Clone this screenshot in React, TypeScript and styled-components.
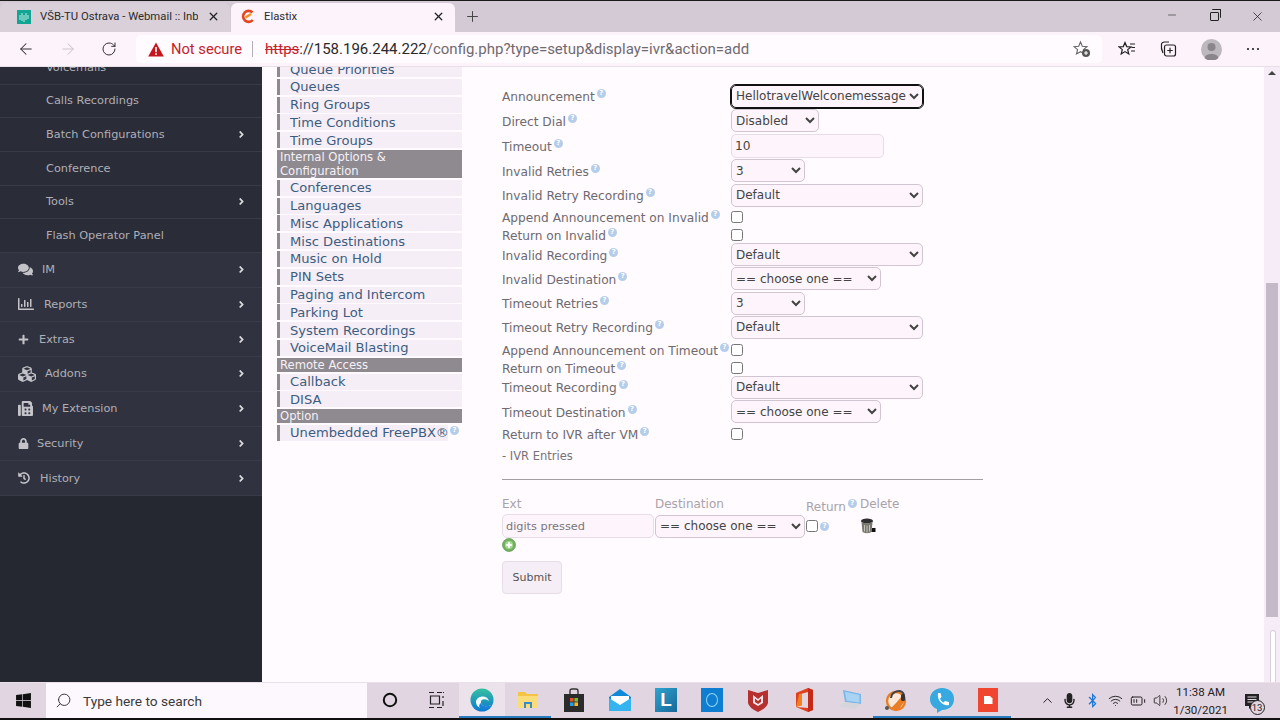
import React from 'react'
import styled, { createGlobalStyle } from 'styled-components'
import {
  FaComments,
  FaPlus,
  FaCubes,
  FaFax,
  FaLock,
  FaHistory,
  FaAngleRight,
  FaRegChartBar,
  FaWindows,
  FaBluetoothB,
  FaMicrophone,
} from 'react-icons/fa'
import {
  ArrowLeft,
  ArrowRight,
  RotateCw,
  X,
  Plus,
  Minus,
  Search,
  ChevronUp,
  Wifi,
  Volume2,
  BatteryMedium,
} from 'lucide-react'

const GlobalStyle = createGlobalStyle`
  html, body { margin: 0; padding: 0; overflow: hidden; background: #fffbff; }
  * { box-sizing: border-box; }
`

const Screen = styled.div`
  width: 1280px;
  height: 720px;
  display: flex;
  flex-direction: column;
  overflow: hidden;
  position: relative;
  font-family: 'DejaVu Sans', sans-serif;
`

/* browser chrome */
const TabStrip = styled.div`
  height: 32px;
  flex: none;
  display: flex;
  align-items: flex-end;
  background: #d3cad5;
  border-top: 1px solid #1a1a1a;
  font-family: Roboto, sans-serif;
  font-size: 11.3px;
  color: #2b2b2b;
`
const Tab = styled.div<{ $active?: boolean }>`
  width: ${p => (p.$active ? '224px' : '230px')};
  height: 29px;
  display: flex;
  align-items: center;
  gap: 9px;
  padding: 0 10px 2px ${p => (p.$active ? '10px' : '17px')};
  border-radius: 6px 6px 0 0;
  background: ${p => (p.$active ? '#fdf3fb' : '#d9d0da')};
  margin-left: ${p => (p.$active ? '1px' : '0')};
`
const TabTitle = styled.span`
  flex: 1;
  white-space: nowrap;
  overflow: hidden;
`
const NewTab = styled.div`
  width: 34px;
  display: flex;
  justify-content: center;
  align-self: center;
  color: #444;
`
const WindowButtons = styled.div`
  margin-left: auto;
  padding-right: 1px;
  display: flex;
  align-self: center;
  color: #222;
`
const WindowButton = styled.div`
  width: 43px;
  display: flex;
  justify-content: center;
`
const RestoreIcon = styled.div`
  width: 9px;
  height: 9px;
  margin: 3px 0 0;
  border: 1px solid #222;
  position: relative;
  border-radius: 1px;
  &::after {
    content: '';
    position: absolute;
    left: 1px;
    top: -4px;
    width: 8px;
    height: 8px;
    border: 1px solid #222;
    border-left: 0;
    border-bottom: 0;
    border-radius: 1px;
  }
`
const Toolbar = styled.div`
  height: 35px;
  flex: none;
  display: flex;
  align-items: center;
  background: #fdf3fb;
  border-bottom: 1px solid #e8dfe9;
  padding-left: 5px;
`
const ToolButton = styled.div<{ $w: number; $dim?: boolean }>`
  width: ${p => p.$w}px;
  display: flex;
  justify-content: center;
  color: ${p => (p.$dim ? '#cfc6cf' : '#333')};
`
const AddressBar = styled.div`
  width: 966px;
  height: 28px;
  margin-left: 6px;
  padding: 0 11px 0 12px;
  display: flex;
  align-items: center;
  border-radius: 5px;
  background: #fffbff;
  font-family: Roboto, sans-serif;
  font-size: 15px;
  white-space: nowrap;
`
const NotSecure = styled.span`
  color: #c4232b;
  margin-left: 7px;
  font-size: 14.7px;
`
const Divider = styled.span`
  width: 1px;
  height: 16px;
  margin: 0 12px 0 10px;
  background: #b5adb6;
`
const UrlScheme = styled.span`
  color: #c4232b;
  text-decoration: line-through;
`
const UrlHost = styled.span`
  color: #2a2a2a;
`
const UrlPath = styled.span`
  color: #6f6a70;
`
const AddFavourite = styled.div`
  margin-left: auto;
  display: flex;
  color: #555;
`
const Avatar = styled.div`
  width: 21px;
  height: 21px;
  border-radius: 50%;
  background: #bdb7be;
  display: flex;
  align-items: center;
  justify-content: center;
`

/* page */
const Page = styled.div`
  flex: 1;
  min-height: 0;
  display: flex;
  overflow: hidden;
  background: #fffbff;
`
const Sidebar = styled.nav`
  width: 262px;
  flex: none;
  background: #252831;
  overflow: hidden;
`
const SideList = styled.div`
  margin-top: -16px;
`
const SideRow = styled.div<{ $main?: boolean }>`
  height: ${p => (p.$main ? '34.75px' : '33.65px')};
  display: flex;
  align-items: center;
  padding: ${p => (p.$main ? '0 16px 0 18px' : '0 16px 0 46px')};
  background: ${p => (p.$main ? '#30333f' : '#2a2c38')};
  border-bottom: 1px solid #383b47;
  color: #afafb6;
  font-size: 11.3px;
`
const SideIcon = styled.span<{ $w: number }>`
  width: ${p => p.$w}px;
  flex: none;
  display: flex;
  align-items: center;
  color: #c3c3c9;
`
const SideArrow = styled.span`
  margin-left: auto;
  display: flex;
  color: #dcdce0;
  margin-right: -1px;
`
const ModuleNav = styled.div`
  width: 185px;
  flex: none;
  margin: -6px 0 0 15px;
`
const NavItem = styled.div<{ $short?: boolean }>`
  width: ${p => (p.$short ? '171px' : '185px')};
  height: 16px;
  margin-bottom: 1.8px;
  padding-left: 10px;
  display: flex;
  align-items: center;
  white-space: nowrap;
  position: relative;
  border-left: 3px solid #8f8a90;
  background: #f6eef6;
  color: #3c5d80;
  font-size: 13.1px;
`
const NavHeader = styled.div`
  margin: 0 0 1.8px;
  padding: 0 3px;
  background: #8f8a90;
  color: #f6f1f6;
  font-size: 11.6px;
  line-height: 14px;
`
const NavHelp = styled.span`
  position: absolute;
  left: 168px;
  top: 1px;
`
const Content = styled.main`
  flex: 1;
  padding: 17px 0 0 40px;
  min-width: 0;
`
const Row = styled.div<{ $h: number }>`
  height: ${p => p.$h}px;
  display: flex;
  align-items: center;
`
const Label = styled.span`
  width: 229px;
  flex: none;
  white-space: nowrap;
  color: #6e6a70;
  font-size: 12.2px;
  padding-top: 1px;
`
const Help = styled.sup`
  display: inline-flex;
  width: 9px;
  height: 9px;
  margin-left: 2px;
  border-radius: 50%;
  align-items: center;
  justify-content: center;
  background: #b4cdea;
  color: #fff;
  font-size: 7px;
  font-weight: bold;
  line-height: 1;
  vertical-align: 6px;
`
const Select = styled.select<{ $w: number; $focus?: boolean }>`
  width: ${p => p.$w}px;
  height: 23px;
  padding: 0;
  border: 1px solid #d0c5d1;
  border-radius: 5px;
  background-color: #fdf5fb;
  color: #444;
  font-family: 'DejaVu Sans', sans-serif;
  font-size: 12px;
  ${p => p.$focus && 'border: 1px solid #111; outline: 1px solid #111;'}
`
const TextInput = styled.input<{ $w: number; $muted?: boolean }>`
  width: ${p => p.$w}px;
  height: 24px;
  padding: 0 3px;
  border: 1px solid #e6dde7;
  border-radius: 5px;
  background: #fdf5fb;
  color: ${p => (p.$muted ? '#7a757b' : '#444')};
  font-family: 'DejaVu Sans', sans-serif;
  font-size: ${p => (p.$muted ? '11.3px' : '12.2px')};
`
const Check = styled.input`
  width: 12px;
  height: 12px;
  margin: 0;
`
const Section = styled.div`
  height: 24px;
  display: flex;
  align-items: center;
  color: #777278;
  font-size: 11.5px;
`
const Rule = styled.hr`
  width: 481px;
  height: 1px;
  margin: 11px 0 0;
  border: 0;
  background: #a39ea4;
`
const EntryGrid = styled.div`
  margin-top: 17px;
  display: grid;
  grid-template-columns: 153px 151px 54px auto;
  width: 481px;
`
const EntryHead = styled.div<{ $low?: boolean }>`
  height: 17px;
  color: #a8a3a9;
  font-size: 12px;
  white-space: nowrap;
  padding-top: ${p => (p.$low ? '2px' : '0')};
`
const EntryCell = styled.div`
  display: flex;
  align-items: center;
  height: 24px;
`
const AddEntry = styled.div`
  display: flex;
`
const Submit = styled.button`
  display: block;
  margin-top: 9px;
  width: 60px;
  height: 33px;
  padding: 0;
  border: 1px solid #e6dde7;
  border-radius: 4px;
  background: #f6eef6;
  color: #555;
  font-family: 'DejaVu Sans', sans-serif;
  font-size: 11px;
`
const Scrollbar = styled.div`
  width: 16px;
  flex: none;
  padding: 0 2px;
  background: #f5ecf7;
  position: relative;
`
const ScrollUp = styled.div`
  width: 0;
  margin: 4px auto 0;
  border: 4px solid transparent;
  border-top: 0;
  border-bottom: 4px solid #444;
`
const ScrollThumb = styled.div`
  height: 334px;
  margin-top: 208px;
  background: #c4b9c6;
`
const EdgePill = styled.div`
  position: absolute;
  left: 6px;
  bottom: 0;
  width: 6px;
  height: 52px;
  border: 1px solid #d8ced9;
  border-bottom: 0;
  border-radius: 3px 3px 0 0;
  background: #fff;
`

/* windows taskbar */
const Taskbar = styled.div`
  height: 38px;
  flex: none;
  display: flex;
  align-items: stretch;
  background: #e1d5e1;
  border-bottom: 2px solid #111;
  border-top: 1px solid #e9e0e9;
  font-family: Roboto, sans-serif;
`
const StartButton = styled.div`
  width: 46px;
  display: flex;
  align-items: center;
  justify-content: center;
  color: #111;
`
const SearchBox = styled.div`
  width: 321px;
  display: flex;
  align-items: center;
  gap: 11px;
  padding-left: 9px;
  background: #fdf8fd;
  color: #3a3a3a;
  font-size: 13.7px;
`
const TaskIcon = styled.div<{ $open?: boolean; $active?: boolean }>`
  width: 46px;
  display: flex;
  align-items: center;
  justify-content: center;
  background: ${p => (p.$active ? '#ebe2ec' : 'transparent')};
  border-bottom: 2px solid ${p => (p.$open ? '#2a7bc0' : 'transparent')};
`
const Tray = styled.div`
  margin-left: 25px;
  display: flex;
  align-items: center;
  color: #222;
`
const TrayIcon = styled.div`
  width: 22.6px;
  display: flex;
  justify-content: center;
`
const Clock = styled.div`
  width: 58px;
  text-align: center;
  color: #222;
  font-size: 11.5px;
  line-height: 18px;
`
const Notifications = styled.div`
  width: 44px;
  display: flex;
  justify-content: center;
  position: relative;
`
const NotifyBadge = styled.span`
  position: absolute;
  left: 20px;
  top: 7px;
  width: 15px;
  height: 15px;
  border: 1px solid #222;
  border-radius: 50%;
  background: #e1d5e1;
  font-size: 9.5px;
  line-height: 13px;
  text-align: center;
  color: #222;
`
const LetterTile = styled.div`
  width: 22px;
  height: 24px;
  display: flex;
  align-items: center;
  justify-content: center;
  background: linear-gradient(135deg, #2fa3cf, #17689a);
  color: #fff;
  font-family: 'Liberation Sans', sans-serif;
  font-size: 19px;
  font-weight: bold;
`
const CircleTile = styled.div`
  width: 22px;
  height: 24px;
  display: flex;
  align-items: center;
  justify-content: center;
  background: #0f7ed0;
  &::after {
    content: '';
    width: 10px;
    height: 12px;
    border: 1.5px solid #8fd6f5;
    border-radius: 50%;
  }
`

const subItems = [
  { label: 'Voicemails' },
  { label: 'Calls Recordings' },
  { label: 'Batch Configurations', arrow: true },
  { label: 'Conference' },
  { label: 'Tools', arrow: true },
  { label: 'Flash Operator Panel' },
]

const mainItems = [
  { label: 'IM', w: 24, icon: <FaComments size={15} /> },
  { label: 'Reports', w: 26, icon: <FaRegChartBar size={16} /> },
  { label: 'Extras', w: 21, icon: <FaPlus size={11} /> },
  { label: 'Addons', w: 27, icon: <FaCubes size={18} /> },
  { label: 'My Extension', w: 24, icon: <FaFax size={15} /> },
  { label: 'Security', w: 19, icon: <FaLock size={11} /> },
  { label: 'History', w: 22, icon: <FaHistory size={12} /> },
]

type NavEntry = { head?: string; label?: string }

const navEntries: NavEntry[] = [
  { label: 'Queue Priorities' },
  { label: 'Queues' },
  { label: 'Ring Groups' },
  { label: 'Time Conditions' },
  { label: 'Time Groups' },
  { head: 'Internal Options & Configuration' },
  { label: 'Conferences' },
  { label: 'Languages' },
  { label: 'Misc Applications' },
  { label: 'Misc Destinations' },
  { label: 'Music on Hold' },
  { label: 'PIN Sets' },
  { label: 'Paging and Intercom' },
  { label: 'Parking Lot' },
  { label: 'System Recordings' },
  { label: 'VoiceMail Blasting' },
  { head: 'Remote Access' },
  { label: 'Callback' },
  { label: 'DISA' },
  { head: 'Option' },
]

type Field =
  | { kind: 'select'; label: string; h: number; value: string; w: number; focus?: boolean }
  | { kind: 'input'; label: string; h: number; value: string }
  | { kind: 'check'; label: string; h: number }

const CHOOSE = '== choose one =='

const fields: Field[] = [
  { kind: 'select', label: 'Announcement', h: 24, value: 'HellotravelWelconemessage', w: 192, focus: true },
  { kind: 'select', label: 'Direct Dial', h: 25, value: 'Disabled', w: 88 },
  { kind: 'input', label: 'Timeout', h: 25, value: '10' },
  { kind: 'select', label: 'Invalid Retries', h: 25, value: '3', w: 74 },
  { kind: 'select', label: 'Invalid Retry Recording', h: 24, value: 'Default', w: 192 },
  { kind: 'check', label: 'Append Announcement on Invalid', h: 19 },
  { kind: 'check', label: 'Return on Invalid', h: 17 },
  { kind: 'select', label: 'Invalid Recording', h: 23, value: 'Default', w: 192 },
  { kind: 'select', label: 'Invalid Destination', h: 25, value: CHOOSE, w: 150 },
  { kind: 'select', label: 'Timeout Retries', h: 24, value: '3', w: 74 },
  { kind: 'select', label: 'Timeout Retry Recording', h: 24, value: 'Default', w: 192 },
  { kind: 'check', label: 'Append Announcement on Timeout', h: 22 },
  { kind: 'check', label: 'Return on Timeout', h: 14 },
  { kind: 'select', label: 'Timeout Recording', h: 24, value: 'Default', w: 192 },
  { kind: 'select', label: 'Timeout Destination', h: 25, value: CHOOSE, w: 150 },
  { kind: 'check', label: 'Return to IVR after VM', h: 20 },
]

const ValueSelect = ({ value, w, focus }: { value: string; w: number; focus?: boolean }) => (
  <Select $w={w} $focus={focus} defaultValue={value}>
    <option>{value}</option>
  </Select>
)

const WebmailFavicon = () => (
  <svg width="14" height="14" viewBox="0 0 14 14">
    <rect width="14" height="14" fill="#12a594" />
    <path d="M3 5v5M5 3v8M7 5v7M9 3v7M11 5v4" stroke="#bfeee6" strokeWidth="1" />
  </svg>
)

const ElastixFavicon = () => (
  <svg width="14" height="15" viewBox="0 0 14 15">
    <path d="M11.5 3.5A5.5 5.5 0 1 0 11.8 11" fill="none" stroke="#e2451f" strokeWidth="2.6" />
    <path d="M4.5 8.5 L10 5" stroke="#f09020" strokeWidth="2.4" />
  </svg>
)

const WarningIcon = () => (
  <svg width="16" height="15" viewBox="0 0 16 15">
    <path d="M8 0.5 L15.8 14.5 H0.2 Z" fill="#c4161c" />
    <rect x="7.2" y="5" width="1.6" height="5.2" fill="#fff" />
    <rect x="7.2" y="11.2" width="1.6" height="1.7" fill="#fff" />
  </svg>
)

const FavouritesIcon = () => (
  <svg width="18" height="18" viewBox="0 0 18 18" fill="none" stroke="#222" strokeWidth="1.2">
    <path d="M7 2.5 L8.7 6.6 L13 6.9 L9.7 9.6 L10.8 14 L7 11.6 L3.2 14 L4.3 9.6 L1 6.9 L5.3 6.6 Z" />
    <path d="M12 4h5M13.5 7.5H17M13 11h4" />
  </svg>
)

const CollectionsIcon = () => (
  <svg width="18" height="18" viewBox="0 0 18 18" fill="none" stroke="#222" strokeWidth="1.2">
    <path d="M4 13 C2.5 10 2 7 2.5 4 C2.8 2.4 4 2 5.5 2 H10" />
    <rect x="5.5" y="5" width="11" height="11" rx="2" />
    <path d="M11 7.8v5.4M8.3 10.5h5.4" />
  </svg>
)

const StarAddIcon = () => (
  <svg width="18" height="18" viewBox="0 0 18 18">
    <path
      d="M7.5 2 L9.3 6.2 L14 6.6 L10.4 9.6 L11.5 14 L7.5 11.7 L3.5 14 L4.6 9.6 L1 6.6 L5.7 6.2 Z"
      fill="none"
      stroke="#666"
      strokeWidth="1.1"
    />
    <circle cx="13" cy="13" r="4" fill="#555" />
    <path d="M13 11v4M11 13h4" stroke="#fff" strokeWidth="1.1" />
  </svg>
)

const AvatarIcon = () => (
  <svg width="21" height="21" viewBox="0 0 21 21">
    <circle cx="10.5" cy="8" r="4" fill="#8a858b" />
    <path d="M3.5 19 C4.5 13.5 16.5 13.5 17.5 19 A10.5 10.5 0 0 1 3.5 19 Z" fill="#8a858b" />
  </svg>
)

const DotsIcon = () => (
  <svg width="14" height="4" viewBox="0 0 14 4" fill="#222">
    <circle cx="2" cy="2" r="1.1" />
    <circle cx="7" cy="2" r="1.1" />
    <circle cx="12" cy="2" r="1.1" />
  </svg>
)

const TrashIcon = () => (
  <svg width="16" height="16" viewBox="0 0 16 16">
    <ellipse cx="7" cy="3" rx="6" ry="2.4" fill="#2e2e2e" />
    <path d="M1.5 4 L2.5 14 Q7 16.5 11.5 14 L12.5 4 Q7 6.5 1.5 4 Z" fill="#77776f" />
    <path d="M4.5 7v6.5M7 7.5v7M9.5 7v6.5" stroke="#c2c2ba" strokeWidth="1" />
    <path d="M12 10h3.5v4H11.5z" fill="#111" />
  </svg>
)

const AddIcon = () => (
  <svg width="14" height="14" viewBox="0 0 14 14">
    <circle cx="7" cy="7" r="6.5" fill="#6fb35c" stroke="#4d8a40" strokeWidth="0.6" />
    <circle cx="7" cy="7" r="4" fill="#a8d898" />
    <path d="M7 4.2v5.6M4.2 7h5.6" stroke="#fff" strokeWidth="1.8" />
  </svg>
)

const EdgeIcon = () => (
  <svg width="24" height="24" viewBox="0 0 24 24">
    <defs>
      <linearGradient id="edgeA" x1="0" y1="0" x2="0" y2="1">
        <stop offset="0" stopColor="#35c1a0" />
        <stop offset="1" stopColor="#0c78d0" />
      </linearGradient>
    </defs>
    <circle cx="12" cy="12" r="11.5" fill="url(#edgeA)" />
    <path d="M6 14 C6 8 17 6 19 13 C15 10 10 11 11 15 C12 19 17 19 21 17 C17 23 6 21 6 14 Z" fill="#fff" opacity="0.95" />
    <path d="M11 15 C12 19 17 19 21 17 C19 21 15 22 12 21 C9 20 8 17 11 15 Z" fill="#1780d8" />
  </svg>
)

const FolderIcon = () => (
  <svg width="22" height="20" viewBox="0 0 22 20">
    <path d="M1 2 H8 L10 4 H21 V18 H1 Z" fill="#f6c445" />
    <rect x="1" y="6" width="20" height="12" fill="#fbdc7a" />
    <path d="M7 18 V12 H15 V18 H13 V14 H9 V18 Z" fill="#3a8cc8" />
  </svg>
)

const StoreIcon = () => (
  <svg width="20" height="24" viewBox="0 0 20 24">
    <path d="M6 6 V3 Q6 1 8 1 H12 Q14 1 14 3 V6" fill="none" stroke="#333" strokeWidth="1.4" />
    <rect x="0" y="6" width="20" height="18" fill="#2b2b2b" />
    <rect x="6" y="10" width="3.6" height="3.6" fill="#e8502a" />
    <rect x="10.4" y="10" width="3.6" height="3.6" fill="#7cb92e" />
    <rect x="6" y="14.4" width="3.6" height="3.6" fill="#23a0e8" />
    <rect x="10.4" y="14.4" width="3.6" height="3.6" fill="#f6b81e" />
  </svg>
)

const MailIcon = () => (
  <svg width="24" height="24" viewBox="0 0 24 24">
    <path d="M1 9 L12 1 L23 9 V23 H1 Z" fill="#0f8ad8" />
    <path d="M3 8 H21 V13 L12 18 L3 13 Z" fill="#fff" />
    <path d="M1 10 L12 17 L23 10 V23 H1 Z" fill="#35b4ef" />
  </svg>
)

const ShieldIcon = () => (
  <svg width="20" height="24" viewBox="0 0 20 24">
    <path d="M0 2 L10 5 L20 2 V15 Q19 20 10 24 Q1 20 0 15 Z" fill="#b5302f" />
    <path d="M5 7 L10 11 L15 7 V15 L10 18 L5 15 Z" fill="#f0e4e8" />
    <path d="M7 10.5 L10 13 L13 10.5 V14 L10 16 L7 14 Z" fill="#b5302f" />
  </svg>
)

const OfficeIcon = () => (
  <svg width="17" height="24" viewBox="0 0 17 24">
    <path d="M0 5 L12 0 L17 2 V22 L12 24 L0 19 L12 20 V4 L3 6.5 V17 L0 19 Z" fill="#e0401e" />
    <path d="M12 0 L17 2 V22 L12 24 Z" fill="#c32a18" />
    <path d="M3 6.5 L6 5.7 V17.5 L0 19 Z" fill="#f08020" />
  </svg>
)

const LaptopIcon = () => (
  <svg width="26" height="24" viewBox="0 0 26 24">
    <path d="M6 2 L24 6 V16 L8 14 Z" fill="#7ab6e6" />
    <path d="M8 3.8 L22.5 7 V14.5 L9.5 12.8 Z" fill="#a9d3f2" />
    <path d="M2 18 L8 14 L24 16 L18 21 Z" fill="#d5d5db" />
  </svg>
)

const HeadsetIcon = () => (
  <svg width="26" height="26" viewBox="0 0 26 26">
    <circle cx="13" cy="14" r="9" fill="#fbe8d8" stroke="#e97e28" strokeWidth="2.4" />
    <path d="M7 22 L13 16 L19 9 L22 14 L16 22 Z" fill="#e97e28" />
    <path d="M8 11 C9 3 19 2 21 8" fill="none" stroke="#444" strokeWidth="2" />
    <rect x="18" y="7" width="4" height="7" rx="1.6" fill="#333" />
    <circle cx="4" cy="21" r="2" fill="#555" />
  </svg>
)

const PhoneBubbleIcon = () => (
  <svg width="24" height="26" viewBox="0 0 24 26">
    <path d="M12 1 C20 1 24 6 24 12 C24 19 19 23 12 23 L7 26 V22 C2 20 0 16 0 12 C0 6 5 1 12 1 Z" fill="#38a8e0" />
    <path d="M8 6 L10.5 6 L11.5 10 L10 11.5 C10.5 13.5 12 15 13.5 15.5 L15 14 L19 15 V18 C13 19.5 6.5 13 8 6 Z" fill="#fff" />
  </svg>
)

const RedTileIcon = () => (
  <svg width="20" height="24" viewBox="0 0 20 24">
    <rect width="20" height="24" fill="#f0452f" />
    <path d="M6 8 H12 L14.5 10.5 V16 H6 Z" fill="#fff" />
  </svg>
)

const NotifyIcon = () => (
  <svg width="16" height="16" viewBox="0 0 16 16">
    <path d="M1 1h14v12H8l-3 3v-3H1z" fill="#222" />
    <path d="M3.5 4h9M3.5 6.5h9M3.5 9h6" stroke="#e1d5e1" strokeWidth="1" />
  </svg>
)

const taskIcons = [
  { key: 'cortana', node: <svg width="18" height="18" viewBox="0 0 18 18"><circle cx="9" cy="9" r="6.2" fill="none" stroke="#111" strokeWidth="2" /></svg> },
  { key: 'tasks', node: <svg width="18" height="18" viewBox="0 0 18 18" fill="none" stroke="#222" strokeWidth="1.2"><path d="M2 1.5h5M10 1.5h5M16 1.5h1M3.5 5h9v8h-9zM2 16.5h5M10 16.5h5M16 5v2M16 10v5" /></svg> },
  { key: 'edge', node: <EdgeIcon />, open: true, active: true },
  { key: 'files', node: <FolderIcon />, open: true },
  { key: 'store', node: <StoreIcon /> },
  { key: 'mail', node: <MailIcon /> },
  { key: 'letter', node: <LetterTile>L</LetterTile> },
  { key: 'circle', node: <CircleTile /> },
  { key: 'shield', node: <ShieldIcon /> },
  { key: 'office', node: <OfficeIcon /> },
  { key: 'laptop', node: <LaptopIcon /> },
  { key: 'headset', node: <HeadsetIcon />, open: true },
  { key: 'phone', node: <PhoneBubbleIcon />, open: true },
  { key: 'red', node: <RedTileIcon />, open: true },
]

const App = () => (
  <Screen>
    <GlobalStyle />
    <TabStrip>
      <Tab>
        <WebmailFavicon />
        <TabTitle>VŠB-TU Ostrava - Webmail :: Inb</TabTitle>
        <X size={13} strokeWidth={2.4} color="#222" />
      </Tab>
      <Tab $active>
        <ElastixFavicon />
        <TabTitle>Elastix</TabTitle>
        <X size={13} strokeWidth={2.4} color="#222" />
      </Tab>
      <NewTab>
        <Plus size={17} strokeWidth={1.4} />
      </NewTab>
      <WindowButtons>
        <WindowButton>
          <Minus size={12} strokeWidth={1.2} />
        </WindowButton>
        <WindowButton>
          <RestoreIcon />
        </WindowButton>
        <WindowButton>
          <X size={15} strokeWidth={1.2} />
        </WindowButton>
      </WindowButtons>
    </TabStrip>
    <Toolbar>
      <ToolButton $w={42}>
        <ArrowLeft size={18} strokeWidth={1.4} />
      </ToolButton>
      <ToolButton $w={41} $dim>
        <ArrowRight size={18} strokeWidth={1.4} />
      </ToolButton>
      <ToolButton $w={42}>
        <RotateCw size={16} strokeWidth={1.5} />
      </ToolButton>
      <AddressBar>
        <WarningIcon />
        <NotSecure>Not secure</NotSecure>
        <Divider />
        <UrlScheme>https</UrlScheme>
        <UrlHost>://158.196.244.222</UrlHost>
        <UrlPath>/config.php?type=setup&amp;display=ivr&amp;action=add</UrlPath>
        <AddFavourite>
          <StarAddIcon />
        </AddFavourite>
      </AddressBar>
      <ToolButton $w={50}>
        <FavouritesIcon />
      </ToolButton>
      <ToolButton $w={32}>
        <CollectionsIcon />
      </ToolButton>
      <ToolButton $w={54}>
        <Avatar>
          <AvatarIcon />
        </Avatar>
      </ToolButton>
      <ToolButton $w={30}>
        <DotsIcon />
      </ToolButton>
    </Toolbar>

    <Page>
      <Sidebar>
        <SideList>
          {subItems.map(item => (
            <SideRow key={item.label}>
              {item.label}
              {item.arrow && (
                <SideArrow>
                  <FaAngleRight size={11} />
                </SideArrow>
              )}
            </SideRow>
          ))}
          {mainItems.map(item => (
            <SideRow $main key={item.label}>
              <SideIcon $w={item.w}>{item.icon}</SideIcon>
              {item.label}
              <SideArrow>
                <FaAngleRight size={11} />
              </SideArrow>
            </SideRow>
          ))}
        </SideList>
      </Sidebar>

      <ModuleNav>
        {navEntries.map(entry =>
          entry.head ? (
            <NavHeader key={entry.head}>{entry.head}</NavHeader>
          ) : (
            <NavItem key={entry.label}>{entry.label}</NavItem>
          ),
        )}
        <NavItem $short>
          Unembedded FreePBX®
          <NavHelp>
            <Help>?</Help>
          </NavHelp>
        </NavItem>
      </ModuleNav>

      <Content>
        {fields.map(field => (
          <Row $h={field.h} key={field.label}>
            <Label>
              {field.label}
              <Help>?</Help>
            </Label>
            {field.kind === 'select' && <ValueSelect value={field.value} w={field.w} focus={field.focus} />}
            {field.kind === 'input' && <TextInput $w={153} defaultValue={field.value} />}
            {field.kind === 'check' && <Check type="checkbox" />}
          </Row>
        ))}
        <Section>- IVR Entries</Section>
        <Rule />
        <EntryGrid>
          <EntryHead>Ext</EntryHead>
          <EntryHead>Destination</EntryHead>
          <EntryHead $low>
            Return
            <Help>?</Help>
          </EntryHead>
          <EntryHead>Delete</EntryHead>
          <EntryCell>
            <TextInput $w={152} $muted defaultValue="digits pressed" />
          </EntryCell>
          <EntryCell>
            <ValueSelect value={CHOOSE} w={150} />
          </EntryCell>
          <EntryCell>
            <Check type="checkbox" />
            <Help>?</Help>
          </EntryCell>
          <EntryCell>
            <TrashIcon />
          </EntryCell>
        </EntryGrid>
        <AddEntry>
          <AddIcon />
        </AddEntry>
        <Submit type="button">Submit</Submit>
      </Content>

      <Scrollbar>
        <ScrollUp />
        <ScrollThumb />
        <EdgePill />
      </Scrollbar>
    </Page>

    <Taskbar>
      <StartButton>
        <FaWindows size={17} />
      </StartButton>
      <SearchBox>
        <Search size={17} strokeWidth={1.4} style={{ transform: 'scaleX(-1)' }} />
        Type here to search
      </SearchBox>
      {taskIcons.map(icon => (
        <TaskIcon key={icon.key} $open={icon.open} $active={icon.active}>
          {icon.node}
        </TaskIcon>
      ))}
      <Tray>
        <TrayIcon>
          <ChevronUp size={15} strokeWidth={1.6} />
        </TrayIcon>
        <TrayIcon>
          <FaMicrophone size={15} />
        </TrayIcon>
        <TrayIcon>
          <FaBluetoothB size={15} color="#1877d8" />
        </TrayIcon>
        <TrayIcon>
          <Wifi size={15} strokeWidth={1.5} />
        </TrayIcon>
        <TrayIcon>
          <BatteryMedium size={16} strokeWidth={1.5} />
        </TrayIcon>
        <TrayIcon>
          <Volume2 size={15} strokeWidth={1.4} />
        </TrayIcon>
        <Clock>
          11:38 AM
          <br />
          1/30/2021
        </Clock>
        <Notifications>
          <NotifyIcon />
          <NotifyBadge>13</NotifyBadge>
        </Notifications>
      </Tray>
    </Taskbar>
  </Screen>
)

export default App
